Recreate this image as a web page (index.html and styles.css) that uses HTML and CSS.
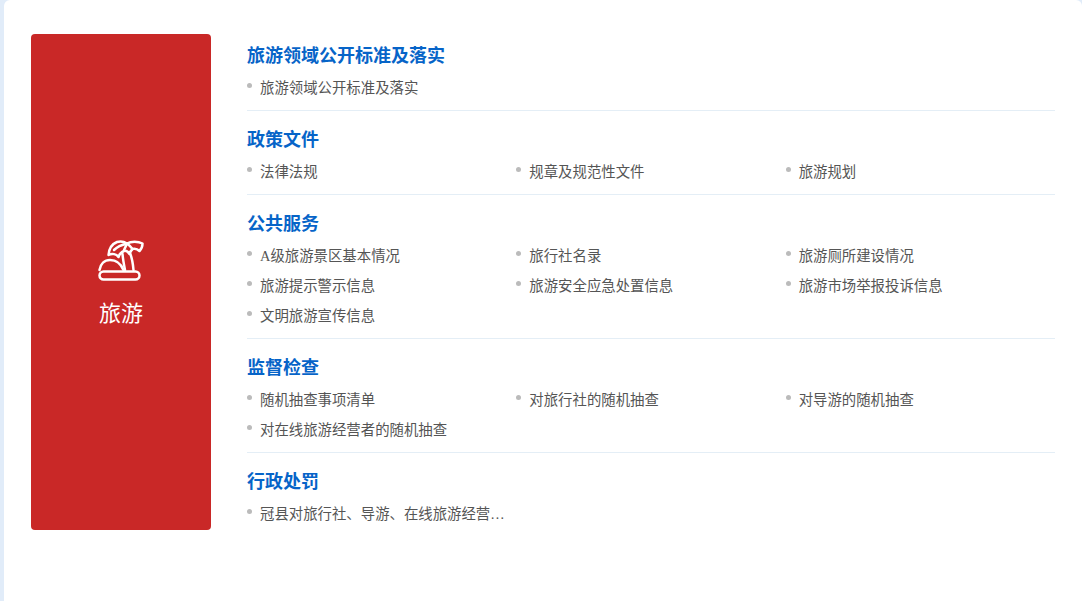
FILE: index.html
```html
<!DOCTYPE html>
<html lang="zh-CN">

<head>
  <meta charset="UTF-8">
  <title>旅游</title>
  <link rel="stylesheet" href="styles.css">
</head>

<body>
  <div class="panel">
    <div class="side">
      <svg class="side-icon" viewBox="0 0 46 42" width="46" height="42" fill="none" stroke="#fff" stroke-width="2.500" stroke-linecap="round" stroke-linejoin="round">
        <path d="M10.500 15C11 9 14 4 19 2C22 1 26 1.500 29 3.500C33 1 40 1 44.500 3.500C44.500 6.500 43.500 9 41.500 11C39.500 9 36.500 8.500 34.500 9C33 10.500 32 12 31.500 14C30 11.500 28 10.500 26 11C23.500 12 21.500 14 20.500 17C18.500 14 14 13 10.500 15Z"/>
        <path d="M16 10C19 7 23 5 29 3.500"/>
        <path d="M26 10C27 8 28 6 29 3.500"/>
        <path d="M34.500 9C33 7 31 5 29 3.500"/>
        <path d="M24.500 14C25 20 26 25 27 30"/>
        <path d="M32 13C34 18 35 24 35.500 30"/>
        <path d="M1.500 30C2.500 24 6.500 20 12 20C18 20 23 24 25.500 30"/>
        <rect x="1.500" y="31.500" width="40" height="8" rx="4"/>
      </svg>
      <div class="side-name">旅游</div>
    </div>
    <div class="groups">
      <section class="group">
        <h3 class="group-title">旅游领域公开标准及落实</h3>
        <ul class="links">
          <li>旅游领域公开标准及落实</li>
        </ul>
      </section>
      <section class="group">
        <h3 class="group-title">政策文件</h3>
        <ul class="links">
          <li>法律法规</li>
          <li>规章及规范性文件</li>
          <li>旅游规划</li>
        </ul>
      </section>
      <section class="group">
        <h3 class="group-title">公共服务</h3>
        <ul class="links">
          <li>A级旅游景区基本情况</li>
          <li>旅行社名录</li>
          <li>旅游厕所建设情况</li>
          <li>旅游提示警示信息</li>
          <li>旅游安全应急处置信息</li>
          <li>旅游市场举报投诉信息</li>
          <li>文明旅游宣传信息</li>
        </ul>
      </section>
      <section class="group">
        <h3 class="group-title">监督检查</h3>
        <ul class="links">
          <li>随机抽查事项清单</li>
          <li>对旅行社的随机抽查</li>
          <li>对导游的随机抽查</li>
          <li>对在线旅游经营者的随机抽查</li>
        </ul>
      </section>
      <section class="group">
        <h3 class="group-title">行政处罚</h3>
        <ul class="links">
          <li>冠县对旅行社、导游、在线旅游经营…</li>
        </ul>
      </section>
    </div>
  </div>
</body>

</html>
```

FILE: styles.css
```css
html, body {
  margin: 0;
  height: 100%;
}
body {
  background: #e1ecf9;
  padding-left: 4px;
  box-sizing: border-box;
  overflow: hidden;
  font-family: "Liberation Serif", "Noto Sans CJK JP", serif;
}
.panel {
  display: flex;
  height: 601px;
  box-sizing: border-box;
  padding: 34px 27px 0 27px;
  background: #fff;
  border-radius: 6px 6px 0 0;
}
.side {
  flex: none;
  display: flex;
  flex-direction: column;
  align-items: center;
  justify-content: center;
  box-sizing: border-box;
  width: 180px;
  height: 496px;
  padding-top: 6px;
  background: #c92827;
  border-radius: 4px;
  color: #fff;
}
.side-icon {
  display: block;
}
.side-name {
  margin-top: 16px;
  font-size: 22px;
  line-height: 32px;
}
.groups {
  flex: 1;
  margin-left: 36px;
  padding-top: 10px;
}
.group {
  border-bottom: 1px solid #e4eef6;
  padding-bottom: 7px;
  margin-bottom: 17px;
}
.group:last-child {
  border-bottom: 0;
}
.group-title {
  margin: 0;
  color: #0664c8;
  font-size: 18px;
  font-weight: bold;
  line-height: 24px;
}
.links {
  display: grid;
  grid-template-columns: repeat(3, 1fr);
  margin: 5px 0 0;
  padding: 0;
  list-style: none;
}
.links li {
  position: relative;
  padding-left: 13px;
  color: #555;
  font-size: 14.4px;
  line-height: 30px;
  white-space: nowrap;
}
.links li::before {
  content: "";
  position: absolute;
  left: 0;
  top: 10px;
  width: 5px;
  height: 5px;
  border-radius: 50%;
  background: #bbb;
}
```
